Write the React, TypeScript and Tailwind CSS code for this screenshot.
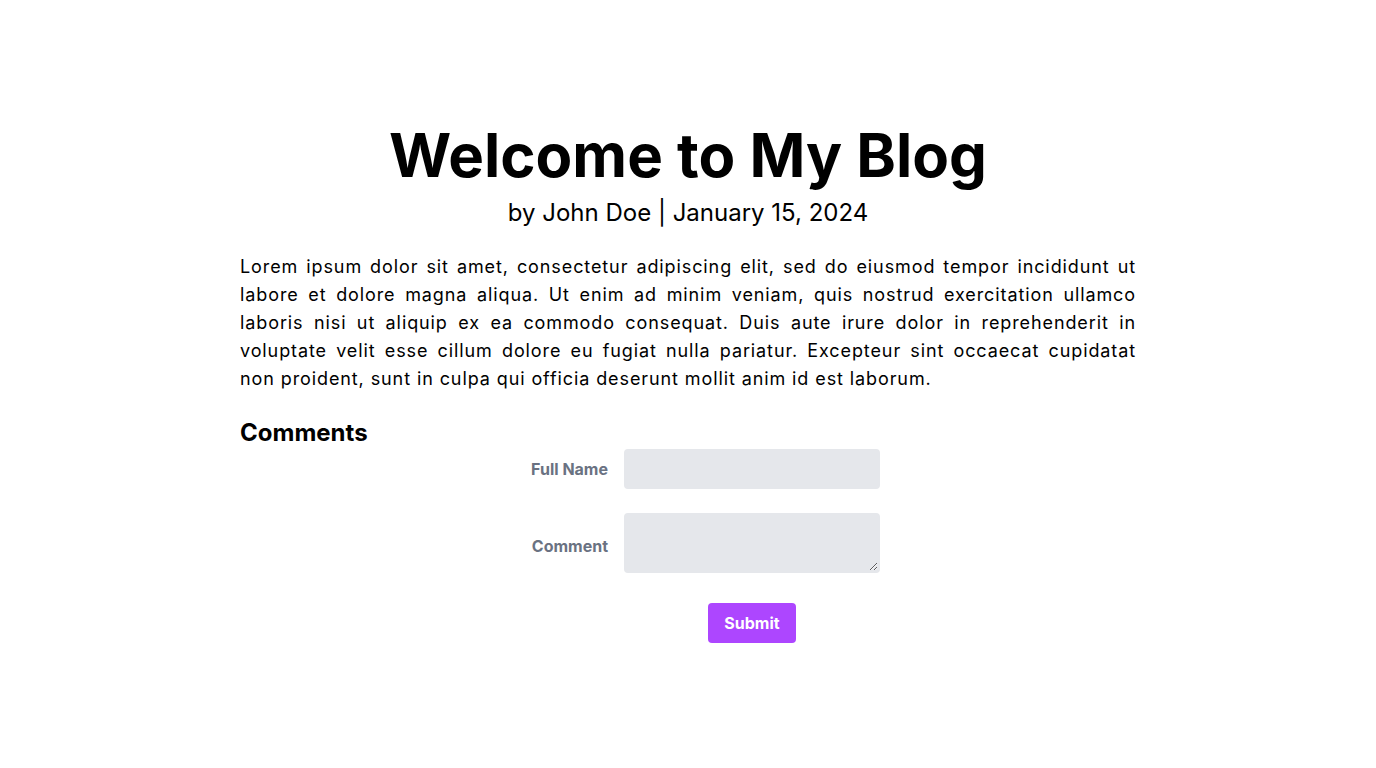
import React from "react";

export default function App() {
  return (
    <div
      className="min-h-screen flex items-center justify-center bg-white text-black"
      style={{ fontFamily: "Inter, 'Noto Sans', sans-serif" }}
    >
      <div className="w-[896px]">
        <h1 className="text-6xl font-bold text-center mb-3">Welcome to My Blog</h1>
        <p className="text-2xl text-center mb-6">by John Doe | January 15, 2024</p>
        <p className="text-lg text-justify tracking-wider mb-6">
          Lorem ipsum dolor sit amet, consectetur adipiscing elit, sed do eiusmod tempor incididunt ut
          labore et dolore magna aliqua. Ut enim ad minim veniam, quis nostrud exercitation ullamco
          laboris nisi ut aliquip ex ea commodo consequat. Duis aute irure dolor in reprehenderit in
          voluptate velit esse cillum dolore eu fugiat nulla pariatur. Excepteur sint occaecat cupidatat
          non proident, sunt in culpa qui officia deserunt mollit anim id est laborum.
        </p>
        <h2 className="text-2xl font-bold">Comments</h2>
        <form className="w-full max-w-sm mx-auto">
          <div className="flex items-center mb-6">
            <div className="w-1/3">
              <label className="block text-gray-500 font-bold text-right pr-4 text-base">Full Name</label>
            </div>
            <div className="w-2/3">
              <input
                type="text"
                className="bg-gray-200 appearance-none border-2 border-gray-200 rounded w-full py-2 px-4 text-gray-700 leading-tight"
              />
            </div>
          </div>
          <div className="flex items-center mb-6">
            <div className="w-1/3">
              <label className="block text-gray-500 font-bold text-right pr-4 text-base">Comment</label>
            </div>
            <div className="w-2/3">
              <textarea
                rows={2}
                className="bg-gray-200 appearance-none border-2 border-gray-200 rounded w-full h-[60px] py-2 px-4 text-gray-700 leading-tight"
              />
            </div>
          </div>
          <div className="flex items-center">
            <div className="w-1/3"></div>
            <div className="w-2/3 flex justify-center">
              <button
                type="button"
                className="bg-purple-500 text-white font-bold py-2 px-4 rounded"
              >
                Submit
              </button>
            </div>
          </div>
        </form>
      </div>
    </div>
  );
}
